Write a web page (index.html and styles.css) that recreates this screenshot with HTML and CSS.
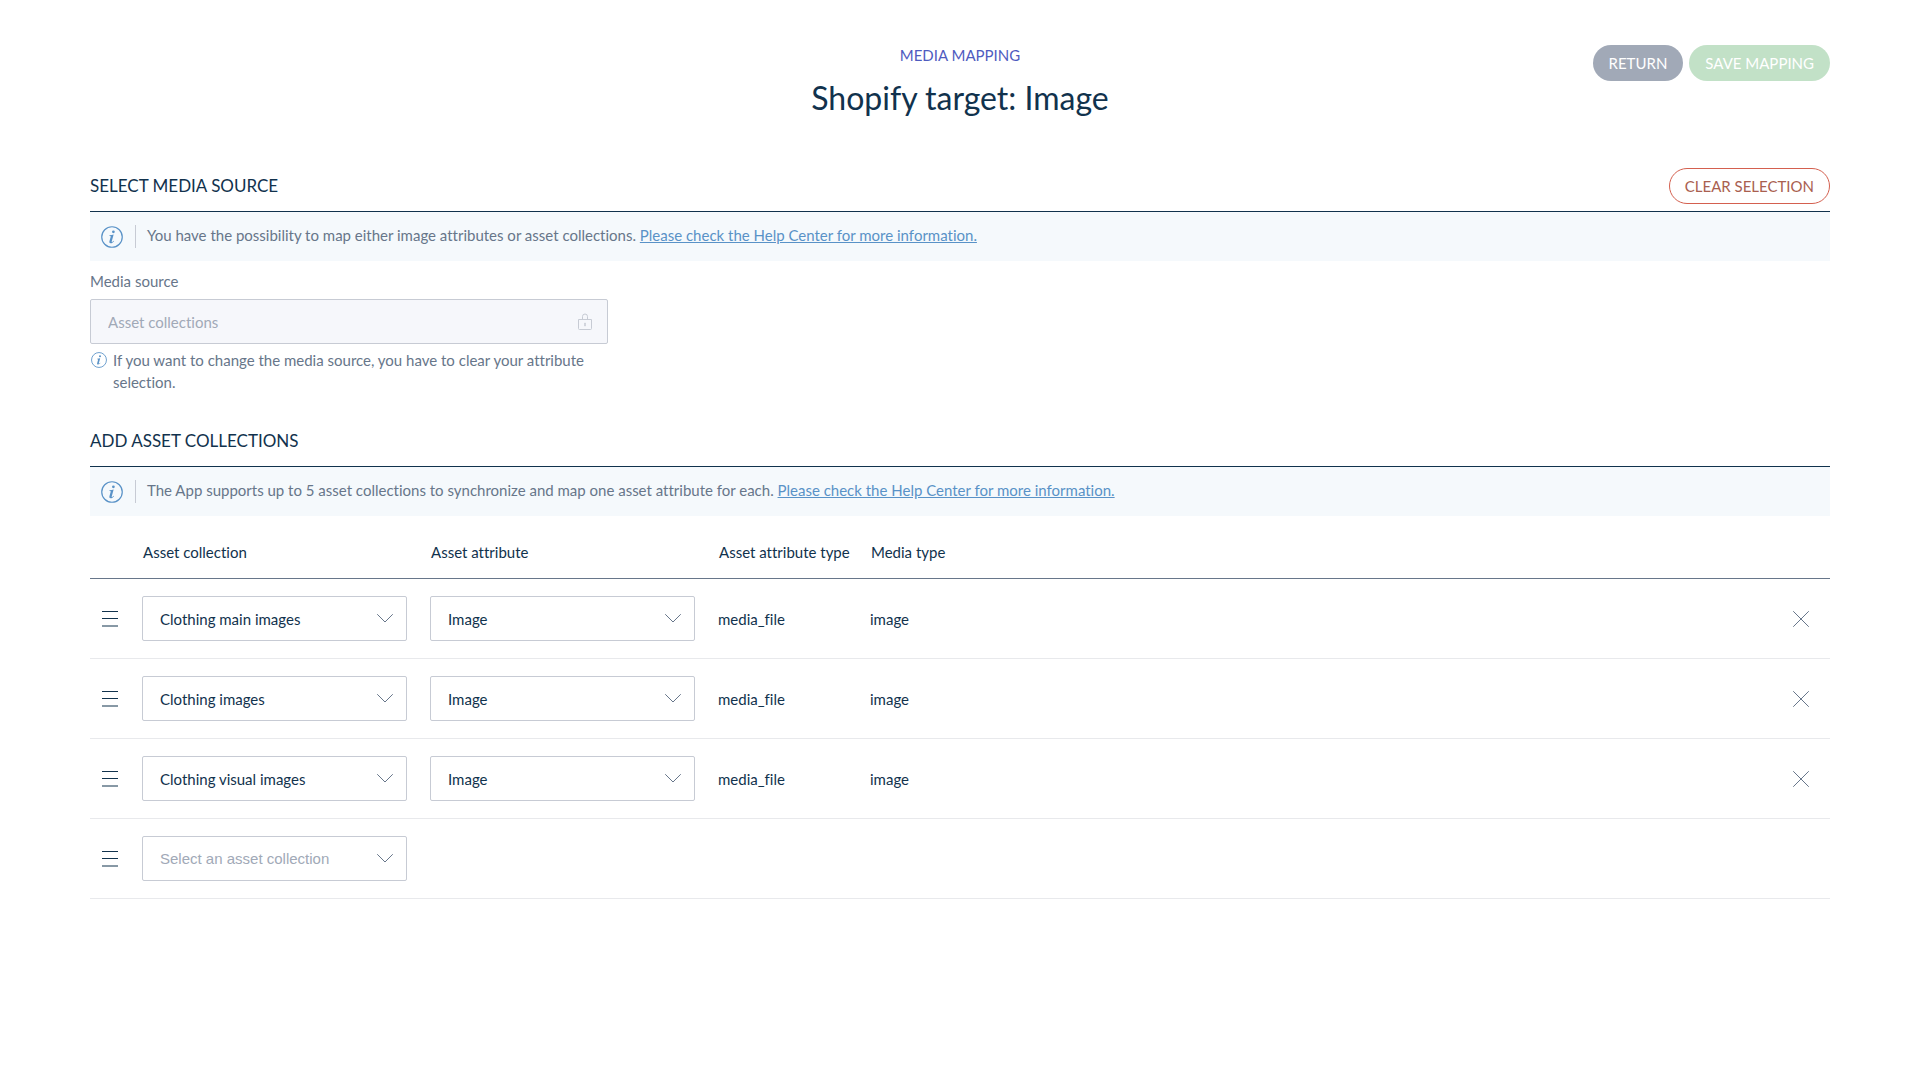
FILE: index.html
```html
<!DOCTYPE html>
<html lang="en">
<head>
<meta charset="utf-8">
<title>Media mapping</title>
<meta name="viewport" content="width=device-width, initial-scale=1">
<link rel="stylesheet" href="styles.css">
</head>
<body>
<svg class="sprite" aria-hidden="true">
  <symbol id="icon-info" viewBox="0 0 24 24">
    <circle cx="12" cy="12" r="11.2" fill="none" stroke="currentColor" stroke-width="1.3"/>
    <circle cx="13.500" cy="6.300" r="1.500" fill="currentColor"/>
    <path d="M9.300 10.200c1.700-.2 3-.5 4.500-.9l-2.100 7.600c-.1.600.2.800.600.500.4-.2.900-.7 1.400-1.200l.5.400c-1.100 1.400-2.300 2.200-3.600 2.200-1.300 0-1.700-.8-1.400-2.100l1.400-4.900c.1-.6-.1-.9-1.400-.9z" fill="currentColor"/>
  </symbol>
  <symbol id="icon-lock" viewBox="0 0 14 17">
    <path d="M.5 6.500h13v9a1 1 0 0 1-1 1h-11a1 1 0 0 1-1-1zM4.500 6.500v-3a2.500 2.500 0 0 1 5 0v3" fill="none" stroke="currentColor"/>
    <path d="M6.500 10h1v3h-1z" fill="currentColor" stroke="currentColor" stroke-width=".5"/>
  </symbol>
  <symbol id="icon-grip" viewBox="0 0 16 17">
    <path d="M0 1.500h16M0 8.500h16M0 16h16" fill="none" stroke="currentColor"/>
  </symbol>
  <symbol id="icon-chevron" viewBox="0 0 16 9">
    <path d="M.5.5 8 8 15.500.5" fill="none" stroke="currentColor" stroke-linecap="round" stroke-linejoin="round"/>
  </symbol>
  <symbol id="icon-close" viewBox="0 0 16 16">
    <path d="M.5.5l15 15M15.500.5l-15 15" fill="none" stroke="currentColor" stroke-linecap="round"/>
  </symbol>
</svg>

<div class="page">
  <header class="page-header">
    <div class="titles">
      <p class="eyebrow">MEDIA MAPPING</p>
      <h1 class="title">Shopify target: Image</h1>
    </div>
    <div class="actions">
      <button class="button button-grey" type="button">RETURN</button>
      <button class="button button-green" type="button">SAVE MAPPING</button>
    </div>
  </header>

  <main>
    <section class="section">
      <div class="section-header">
        <h2 class="section-title">SELECT MEDIA SOURCE</h2>
        <button class="button button-outline" type="button">CLEAR SELECTION</button>
      </div>
      <div class="banner">
        <svg class="banner-icon" aria-hidden="true"><use href="#icon-info"/></svg>
        <p class="banner-text">You have the possibility to map either image attributes or asset collections. <a class="link" href="#">Please check the Help Center for more information.</a></p>
      </div>
      <div class="field">
        <label class="field-label" for="media-source">Media source</label>
        <div class="control">
          <input class="input" id="media-source" type="text" value="Asset collections" disabled>
          <svg class="control-icon icon-lock" aria-hidden="true"><use href="#icon-lock"/></svg>
        </div>
        <div class="helper">
          <svg class="helper-icon" aria-hidden="true"><use href="#icon-info"/></svg>
          <p class="helper-text">If you want to change the media source, you have to clear your attribute selection.</p>
        </div>
      </div>
    </section>

    <section class="section">
      <div class="section-header">
        <h2 class="section-title">ADD ASSET COLLECTIONS</h2>
      </div>
      <div class="banner">
        <svg class="banner-icon" aria-hidden="true"><use href="#icon-info"/></svg>
        <p class="banner-text">The App supports up to 5 asset collections to synchronize and map one asset attribute for each. <a class="link" href="#">Please check the Help Center for more information.</a></p>
      </div>
      <table class="table">
        <colgroup>
          <col class="col-grip"><col class="col-select"><col class="col-select"><col class="col-type"><col class="col-media"><col class="col-remove">
        </colgroup>
        <thead>
          <tr><th></th><th>Asset collection</th><th>Asset attribute</th><th>Asset attribute type</th><th>Media type</th><th></th></tr>
        </thead>
        <tbody>
          <tr>
            <td><svg class="grip" aria-hidden="true"><use href="#icon-grip"/></svg></td>
            <td><div class="control"><select class="select" aria-label="Asset collection"><option>Clothing main images</option></select><svg class="control-icon icon-chevron" aria-hidden="true"><use href="#icon-chevron"/></svg></div></td>
            <td><div class="control"><select class="select" aria-label="Asset attribute"><option>Image</option></select><svg class="control-icon icon-chevron" aria-hidden="true"><use href="#icon-chevron"/></svg></div></td>
            <td>media_file</td>
            <td>image</td>
            <td><button class="remove" type="button" aria-label="Remove"><svg class="icon-close" aria-hidden="true"><use href="#icon-close"/></svg></button></td>
          </tr>
          <tr>
            <td><svg class="grip" aria-hidden="true"><use href="#icon-grip"/></svg></td>
            <td><div class="control"><select class="select" aria-label="Asset collection"><option>Clothing images</option></select><svg class="control-icon icon-chevron" aria-hidden="true"><use href="#icon-chevron"/></svg></div></td>
            <td><div class="control"><select class="select" aria-label="Asset attribute"><option>Image</option></select><svg class="control-icon icon-chevron" aria-hidden="true"><use href="#icon-chevron"/></svg></div></td>
            <td>media_file</td>
            <td>image</td>
            <td><button class="remove" type="button" aria-label="Remove"><svg class="icon-close" aria-hidden="true"><use href="#icon-close"/></svg></button></td>
          </tr>
          <tr>
            <td><svg class="grip" aria-hidden="true"><use href="#icon-grip"/></svg></td>
            <td><div class="control"><select class="select" aria-label="Asset collection"><option>Clothing visual images</option></select><svg class="control-icon icon-chevron" aria-hidden="true"><use href="#icon-chevron"/></svg></div></td>
            <td><div class="control"><select class="select" aria-label="Asset attribute"><option>Image</option></select><svg class="control-icon icon-chevron" aria-hidden="true"><use href="#icon-chevron"/></svg></div></td>
            <td>media_file</td>
            <td>image</td>
            <td><button class="remove" type="button" aria-label="Remove"><svg class="icon-close" aria-hidden="true"><use href="#icon-close"/></svg></button></td>
          </tr>
          <tr>
            <td><svg class="grip" aria-hidden="true"><use href="#icon-grip"/></svg></td>
            <td><div class="control"><select class="select select-empty" aria-label="Asset collection"><option>Select an asset collection</option></select><svg class="control-icon icon-chevron" aria-hidden="true"><use href="#icon-chevron"/></svg></div></td>
            <td></td>
            <td></td>
            <td></td>
            <td></td>
          </tr>
        </tbody>
      </table>
    </section>
  </main>
</div>
</body>
</html>
```
FILE: styles.css
```css
* {
  box-sizing: border-box;
}

body {
  margin: 0;
  background: #fff;
  color: #11324d;
  font-family: Lato, "Liberation Sans", sans-serif;
  font-size: 15px;
  line-height: 20px;
  font-variant-ligatures: none;
}

h1, h2, p {
  margin: 0;
  font-weight: 400;
}

svg {
  display: block;
}

button, input, select {
  margin: 0;
  font: inherit;
  font-variant-ligatures: none;
}

.sprite {
  position: absolute;
  width: 0;
  height: 0;
}

.page {
  padding: 45px 90px;
}

.page-header {
  display: grid;
  grid-template-columns: 1fr auto 1fr;
  align-items: start;
  margin-bottom: 40px;
}

.titles {
  grid-column: 2;
  text-align: center;
}

.eyebrow {
  color: #4f5bbf;
}

.title {
  margin-top: 11px;
  font-size: 32px;
  line-height: 44px;
}

.actions {
  display: flex;
  justify-content: flex-end;
  gap: 6px;
}

.button {
  height: 36px;
  padding: 0 15px;
  border: 1px solid transparent;
  border-radius: 18px;
  color: #fff;
  white-space: nowrap;
}

.button-grey {
  background: #a1a9b7;
}

.button-green {
  background: #c2e1c7;
}

.button-outline {
  background: #fff;
  border-color: #d4604f;
  color: #a9604f;
}

.section-header {
  display: flex;
  align-items: center;
  justify-content: space-between;
  height: 52px;
  border-bottom: 1px solid #11324d;
}

.section-title {
  font-size: 17px;
}

.banner {
  display: flex;
  align-items: center;
  padding: 13px 11px;
  background: #f5f9fc;
  color: #67768a;
}

.banner-icon {
  flex: none;
  width: 22px;
  height: 22px;
  color: #5992c7;
}

.banner-text {
  margin-left: 12px;
  padding: 0 0 3px 11px;
  border-left: 1px solid #c7cbd4;
}

.link {
  color: #5992c7;
}

.field {
  max-width: 518px;
  padding: 10px 0 22px;
  color: #67768a;
}

.field-label {
  display: block;
  margin-bottom: 8px;
}

.control {
  display: grid;
  align-items: center;
}

.input,
.select {
  grid-area: 1 / 1;
  width: 100%;
  height: 45px;
  padding: 0 48px 0 17px;
  border: 1px solid #c7cbd4;
  border-radius: 2px;
  background: #fff;
  color: #11324d;
  appearance: none;
}

.input:disabled {
  background: #f6f7fb;
  color: #a1a9b7;
}

.select-empty {
  color: #a1a9b7;
  font-family: "Liberation Sans", Arial, sans-serif;
}

.control-icon {
  grid-area: 1 / 1;
  justify-self: end;
  pointer-events: none;
}

.icon-lock {
  width: 14px;
  height: 17px;
  margin-right: 16px;
  color: #c7cbd4;
}

.icon-chevron {
  width: 16px;
  height: 9px;
  margin-right: 14px;
  color: #67768a;
}

.helper {
  display: flex;
  gap: 6px;
  padding: 5px 12px 0 1px;
  line-height: 22px;
}

.helper-icon {
  flex: none;
  width: 16px;
  height: 22px;
  color: #5992c7;
}

.table {
  width: 100%;
  table-layout: fixed;
  border-collapse: separate;
  border-spacing: 0;
}

.col-grip { width: 52px; }
.col-select { width: 288px; }
.col-type { width: 152px; }
.col-media { width: 152px; }

th {
  height: 63px;
  padding: 9px 0 0 1px;
  border-bottom: 1px solid #67768a;
  font-weight: 400;
  text-align: left;
}

td {
  height: 80px;
  padding: 0;
  border-bottom: 1px solid #e8e9ec;
}

td .control {
  margin-right: 23px;
}

.grip {
  width: 16px;
  height: 17px;
  margin-left: 12px;
}

.remove {
  display: block;
  margin-left: auto;
  padding: 12px 21px;
  border: 0;
  background: none;
  color: #67768a;
}

.icon-close {
  width: 16px;
  height: 16px;
}
```
